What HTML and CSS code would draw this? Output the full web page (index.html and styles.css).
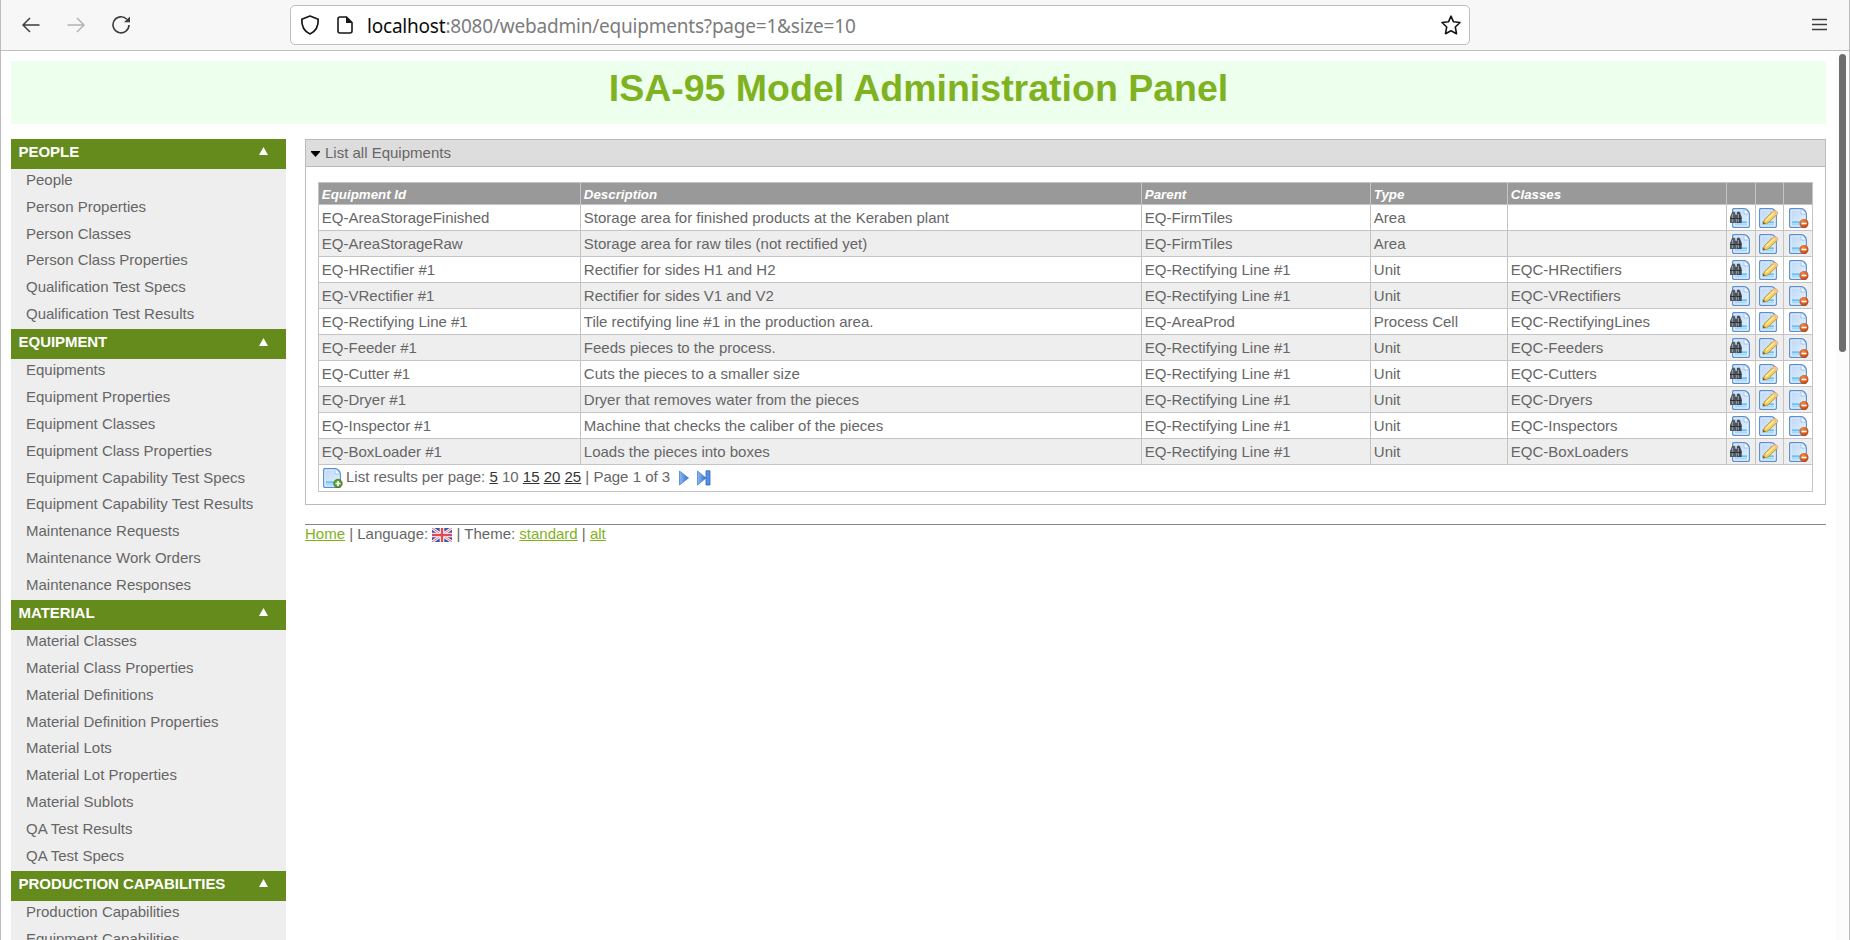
FILE: index.html
```html
<!DOCTYPE html>
<html lang="en">
<head>
<meta charset="utf-8">
<title>ISA-95 Model Administration Panel</title>
<link rel="stylesheet" href="styles.css">
</head>
<body>
<svg class="defs" width="0" height="0">
  <defs>
    <linearGradient id="paper" x1="0" y1="0" x2="1" y2="1"><stop offset="0" stop-color="#bcd6f5"/><stop offset="1" stop-color="#e6f2fe"/></linearGradient>
    <linearGradient id="arrow" x1="0" y1="0" x2="1" y2="0"><stop offset="0" stop-color="#8dbaf0"/><stop offset="1" stop-color="#2f6fce"/></linearGradient>
    <radialGradient id="orange" cx=".4" cy=".3" r=".7"><stop offset="0" stop-color="#f08a45"/><stop offset="1" stop-color="#c0450f"/></radialGradient>
    <symbol id="page" viewBox="0 0 18 20">
      <path d="M1.500 .7H12.500Q14 .7 15.500 2.300T17.300 5.500V18.300Q17.300 19.300 16.300 19.300H1.700Q.7 19.300 .7 18.300V1.700Q.7 .7 1.500 .7Z" fill="url(#paper)" stroke="#5a8fcf" stroke-width="1.300"/>
      <path d="M1.900 2H12V6H16V18H1.900Z" fill="none" stroke="#e6f1fd" stroke-width=".9"/>
      <path d="M3 14.300H15" stroke="#66c4f8" stroke-width="2"/><path d="M3 16.800H15" stroke="#8fd0f8" stroke-width="1"/>
      <path d="M12 1.200V6H17" fill="#f4faff" stroke="#8fb8e6" stroke-width=".8"/>
    </symbol>
    <symbol id="view" viewBox="0 0 20 20">
      <use href="#page" x="2" width="18" height="20"/>
      <path d="M2 4.500Q3.500 2.500 5 4.500L6 8V15H0V9Z" fill="#555b62"/><path d="M7 4.500Q8.500 2.500 10 4.500L11.700 9V15H6.500V8Z" fill="#42484f"/><path d="M5 7H7V11H5Z" fill="#4a5057"/>
      <path d="M2.500 6V14M8.300 6V14" stroke="#90979f" stroke-width="1.200"/><path d="M0 10.500H5.500M6.500 10.500H11.500" stroke="#2b2f34"/>
    </symbol>
    <symbol id="edit" viewBox="0 0 20 20">
      <use href="#page" x="0" width="18" height="20"/>
      <path d="M4 16L5.500 11.500L15 2.500Q18 2 19 5.500L9 15Z" fill="#f6cf5b" stroke="#b98527" stroke-width=".8"/>
      <path d="M7 12.500L16.500 3.700" stroke="#fff0a8" stroke-width="1.500"/><path d="M15 2.500Q18 2 19 5.500L17.300 7L13.700 3.800Z" fill="#efc1a4"/><path d="M4 16L4.700 14L6 15.300Z" fill="#333"/>
    </symbol>
    <symbol id="delete" viewBox="0 0 20 20">
      <use href="#page" width="18" height="20"/>
      <circle cx="15" cy="15.500" r="4.500" fill="url(#orange)"/><path d="M12.500 15.500H17.500" stroke="#fff" stroke-width="1.600"/>
    </symbol>
    <symbol id="add" viewBox="0 0 20 20">
      <use href="#page" width="18" height="20"/>
      <circle cx="15" cy="15.500" r="4.300" fill="#5d9d32" stroke="#397016" stroke-width=".7"/><path d="M12.500 15.500H17.500M15 13V18" stroke="#fff" stroke-width="1.700"/>
    </symbol>
  </defs>
</svg>
<div class="window">
  <header class="toolbar">
    <div class="nav">
      <svg width="18" height="16" viewBox="0 0 18 16"><path d="M17.500 8H1M8 1L1 8L8 15" fill="none" stroke="#3d3d3f" stroke-width="1.500"/></svg>
      <svg width="18" height="16" viewBox="0 0 18 16"><path d="M.5 8H17M10 1L17 8L10 15" fill="none" stroke="#b3b3b3" stroke-width="1.500"/></svg>
      <svg width="19" height="18" viewBox="0 0 19 18"><path d="M14.800 3.300A8 8 0 1 0 17 9" fill="none" stroke="#3d3d3f" stroke-width="1.600"/><path d="M18 .5V6.300H12Z" fill="#3d3d3f"/></svg>
    </div>
    <div class="address">
      <svg class="shield" width="20" height="20" viewBox="0 0 20 20"><path d="M10 1L18.200 4.300C18.500 11 15.500 16.500 10 19C4.500 16.500 1.500 11 1.800 4.300Z" fill="none" stroke="#161616" stroke-width="1.700" stroke-linejoin="round"/></svg>
      <svg class="file" width="16" height="18" viewBox="0 0 16 18"><path d="M3 1H9.500L15 6.500V15Q15 17 13 17H3Q1 17 1 15V3Q1 1 3 1Z" fill="none" stroke="#161616" stroke-width="1.600"/><path d="M9 1L15 7H9Z" fill="#161616"/></svg>
      <span class="url"><b>localhost</b>:8080/webadmin/equipments?page=1&amp;size=10</span>
      <svg class="star" width="20" height="20" viewBox="0 0 20 20"><path d="M10 1.200L12.500 6.800L19 7.500L14.300 12L15.500 18.700L10 15.700L4.500 18.700L5.700 12L1 7.500L7.500 6.800Z" fill="none" stroke="#161616" stroke-width="1.600" stroke-linejoin="round"/></svg>
    </div>
    <svg class="menu" width="15" height="13" viewBox="0 0 15 13"><path d="M0 1.500H15M0 6.500H15M0 11.500H15" stroke="#3d3d3f" stroke-width="1.400"/></svg>
  </header>
  <div class="viewport">
    <div class="page">
      <h1 class="banner">ISA-95 Model Administration Panel</h1>
      <div class="columns">
        <nav class="sidebar" id="sidebar"></nav>
        <main class="content">
          <section class="panel">
            <div class="panel-title"><svg width="9" height="6" viewBox="0 0 9 6"><path d="M0 0H9V1L4.500 6L0 1Z"/></svg><span>List all Equipments</span></div>
            <div class="panel-body">
              <table class="grid">
                <colgroup><col class="c-id"><col class="c-desc"><col class="c-parent"><col class="c-type"><col class="c-class"><col class="c-view"><col class="c-edit"><col class="c-del"></colgroup>
                <thead><tr><th>Equipment Id</th><th>Description</th><th>Parent</th><th>Type</th><th>Classes</th><th></th><th></th><th></th></tr></thead>
                <tbody id="rows"></tbody>
                <tfoot><tr><td colspan="8"><div class="pager"><svg class="add" width="20" height="20"><use href="#add"/></svg><span>List results per page: <a>5</a> 10 <a>15</a> <a>20</a> <a>25</a> | Page 1 of 3</span>
                  <svg class="next" width="10" height="16" viewBox="0 0 10 16"><path d="M.5 1L9.500 8L.5 15Z" fill="url(#arrow)" stroke="#4c83d0" stroke-width=".8"/></svg>
                  <svg class="last" width="14" height="16" viewBox="0 0 14 16"><path d="M.5 1L9 8L.5 15Z" fill="url(#arrow)" stroke="#4c83d0" stroke-width=".8"/><path d="M9 .8H13V15H9Z" fill="#5792e2" stroke="#2c66bd" stroke-width=".8"/></svg></div></td></tr></tfoot>
              </table>
            </div>
          </section>
          <footer class="footer"><a>Home</a> | Language: <svg width="20" height="14" viewBox="0 0 20 14"><path fill="#3f539f" d="M0 0H20V14H0Z"/><path d="M0 0L20 14M20 0L0 14" stroke="#f4f4fa" stroke-width="2.800"/><path d="M0 0L20 14M20 0L0 14" stroke="#e2747c" stroke-width="1"/><path d="M10 0V14M0 7H20" stroke="#fff" stroke-width="4.600"/><path d="M10 0V14M0 7H20" stroke="#e04a54" stroke-width="2.400"/></svg> | Theme: <a>standard</a> | <a>alt</a></footer>
        </main>
      </div>
    </div>
    <div class="scrollbar"><div class="thumb"></div></div>
  </div>
</div>
<script src="app.js"></script>
</body>
</html>
```
FILE: styles.css
```css
* { box-sizing: border-box; }
body { margin: 0; height: 940px; overflow: hidden; background: #fff; color: #666; font: 15px "Liberation Sans", Arial, sans-serif; }
.defs { position: absolute; }
.window { height: 940px; display: flex; flex-direction: column; overflow: hidden; border: 1px solid #bcbcbf; border-width: 0 1px; }
.toolbar { flex: none; height: 51px; display: flex; align-items: center; background: #f7f7f7; border-bottom: 1px solid #bfbfbf; }
.nav { width: 289px; padding-left: 21px; display: flex; align-items: center; gap: 27px; }
.address { width: 1180px; height: 40px; display: flex; align-items: center; background: #fff; border: 1px solid #bfbfbf; border-radius: 5px; }
.shield { margin-left: 9px; }
.file { margin-left: 17px; }
.url { flex: 1; margin-left: 14px; padding-top: 1px; white-space: nowrap; color: #7c7c7c; font: 19px "Noto Sans", sans-serif; letter-spacing: -.21px; }
.url b { font-weight: 400; color: #0c0c0d; }
.star { margin-right: 8px; }
.menu { margin-left: 342px; position: relative; top: -1px; }
.viewport { flex: 1; min-height: 0; display: flex; }
.page { width: 1825px; flex: none; padding: 10px 0 0 10px; overflow: hidden; }
.banner { margin: 0; height: 63px; padding-top: 6px; background: #edffed; color: #7fb221; font-size: 37.5px; line-height: 42px; text-align: center; }
.columns { display: flex; gap: 19px; margin-top: 15px; }
.sidebar { width: 275px; flex: none; }
.section-title { height: 29.6px; padding: 0 18px 5px 7.6px; display: flex; justify-content: space-between; align-items: center; background: #648b1c; color: #fff; font-weight: 700; letter-spacing: -.06px; }
.section-item { height: 26.8px; padding: 2.5px 0 0 15px; line-height: 17px; background: #eee; }
.content { flex: 1; }
.panel { border: 1px solid #bbb; height: 366px; }
.panel-title { height: 27px; display: flex; align-items: center; gap: 5px; padding-left: 5px; background: #ddd; border-bottom: 1px solid #bbb; }
.panel-title svg { margin-top: 2px; }
.panel-title span { margin-bottom: 2px; }
.panel-body { padding: 15px 12px 0; }
.grid { width: 1495px; table-layout: fixed; border-collapse: collapse; }
.c-id { width: 262px; } .c-desc { width: 561px; } .c-parent { width: 229px; } .c-type { width: 137px; } .c-class { width: 219px; } .c-view { width: 29px; } .c-edit { width: 28px; } .c-del { width: 29px; }
.grid th { height: 22px; padding: 2px 2.8px 0; background: #999; border: 1px solid #c4c4c4; color: #fff; font-size: 13.33px; font-style: italic; text-align: left; line-height: 16px; }
.grid td { height: 26px; padding: 0 2.8px; border: 1px solid #c4c4c4; line-height: 18px; white-space: nowrap; }
.grid tbody tr:nth-child(even) { background: #eee; }
.grid td.icon { padding: 1px 0 0 3px; }
.grid td.icon:last-child { padding-left: 5px; }
.icon svg { display: block; }
.grid tfoot td { height: 27px; padding: 0 4px; }
.pager { display: flex; align-items: center; }
.pager span { margin: 0 9px 2px 3px; }
.pager a { color: #333; text-decoration: underline; }
.next { margin-right: 8px; }
.footer { margin-top: 19px; border-top: 1px solid #888; line-height: 18px; }
.footer a { color: #7fb221; text-decoration: underline; }
.footer svg { vertical-align: -3px; }
.scrollbar { flex: 1; padding: 3px 0 0 13px; background: linear-gradient(90deg, #fff 10px, #fcfcfc 10px); }
.thumb { width: 7px; height: 298px; border-radius: 4px; background: #6e6e6e; }
```
FILE: app.js
```js
const sections = [
  ['PEOPLE', ['People', 'Person Properties', 'Person Classes', 'Person Class Properties', 'Qualification Test Specs', 'Qualification Test Results']],
  ['EQUIPMENT', ['Equipments', 'Equipment Properties', 'Equipment Classes', 'Equipment Class Properties', 'Equipment Capability Test Specs', 'Equipment Capability Test Results', 'Maintenance Requests', 'Maintenance Work Orders', 'Maintenance Responses']],
  ['MATERIAL', ['Material Classes', 'Material Class Properties', 'Material Definitions', 'Material Definition Properties', 'Material Lots', 'Material Lot Properties', 'Material Sublots', 'QA Test Results', 'QA Test Specs']],
  ['PRODUCTION CAPABILITIES', ['Production Capabilities', 'Equipment Capabilities']]
];
document.getElementById('sidebar').innerHTML = sections.map(([title, items]) =>
  `<div class="section-title"><span>${title}</span><svg width="9" height="8" viewBox="0 0 9 8"><path d="M0 8L4.500 0L9 8Z" fill="#fff"/></svg></div>` +
  items.map(i => `<div class="section-item">${i}</div>`).join('')).join('');

const line = 'EQ-Rectifying Line #1';
const rows = [
  ['EQ-AreaStorageFinished', 'Storage area for finished products at the Keraben plant', 'EQ-FirmTiles', 'Area', ''],
  ['EQ-AreaStorageRaw', 'Storage area for raw tiles (not rectified yet)', 'EQ-FirmTiles', 'Area', ''],
  ['EQ-HRectifier #1', 'Rectifier for sides H1 and H2', line, 'Unit', 'EQC-HRectifiers'],
  ['EQ-VRectifier #1', 'Rectifier for sides V1 and V2', line, 'Unit', 'EQC-VRectifiers'],
  [line, 'Tile rectifying line #1 in the production area.', 'EQ-AreaProd', 'Process Cell', 'EQC-RectifyingLines'],
  ['EQ-Feeder #1', 'Feeds pieces to the process.', line, 'Unit', 'EQC-Feeders'],
  ['EQ-Cutter #1', 'Cuts the pieces to a smaller size', line, 'Unit', 'EQC-Cutters'],
  ['EQ-Dryer #1', 'Dryer that removes water from the pieces', line, 'Unit', 'EQC-Dryers'],
  ['EQ-Inspector #1', 'Machine that checks the caliber of the pieces', line, 'Unit', 'EQC-Inspectors'],
  ['EQ-BoxLoader #1', 'Loads the pieces into boxes', line, 'Unit', 'EQC-BoxLoaders']
];
document.getElementById('rows').innerHTML = rows.map(r => '<tr>' + r.map(c => `<td>${c}</td>`).join('') +
  ['view', 'edit', 'delete'].map(i => `<td class="icon"><svg width="20" height="20"><use href="#${i}"/></svg></td>`).join('') + '</tr>').join('');
```
